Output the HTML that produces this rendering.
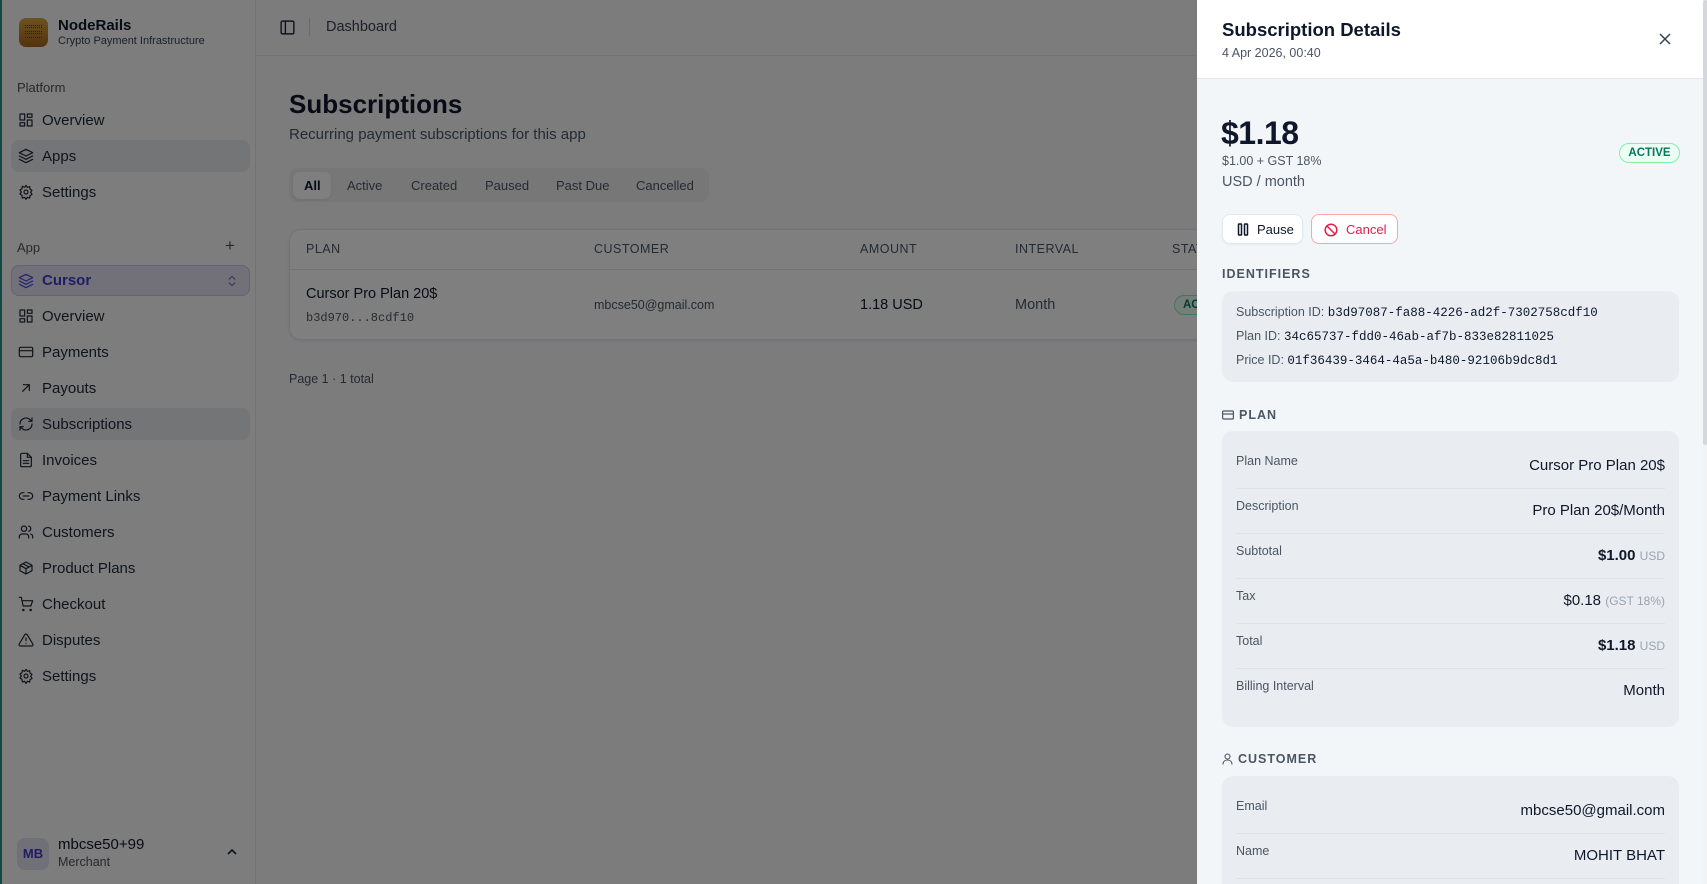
<!DOCTYPE html>
<html style="background:#7c7c7d"><head><meta charset="utf-8"><style>
*{box-sizing:border-box;margin:0;padding:0}
html,body{overflow:hidden;height:884px}
body{width:1707px;height:884px;font-family:"Liberation Sans",sans-serif;background:#f8f9fb;position:relative;color:#0f172a}
.abs{position:absolute;white-space:nowrap}
.side{position:absolute;left:0;top:0;width:256px;height:884px;background:#fafafa;border-right:1px solid #e5e7eb;border-left:2px solid #2a8c8c}
.nav{position:absolute;left:9px;width:239px;height:32px;border-radius:8px;font-size:15px;color:#1f2937;display:flex;align-items:center;padding-left:7px}
.nav svg{width:16px;height:16px;margin-right:8px;stroke:#1f2937;fill:none;stroke-width:1.8;stroke-linecap:round;stroke-linejoin:round}
.nav.act{background:#e9eaec}
.lbl{font-size:13px;color:#52525b}
.top{position:absolute;left:256px;top:0;right:0;height:56px;border-bottom:1px solid #e5e7eb}
.ov{position:absolute;left:0;top:0;width:1197px;height:884px;background:rgba(0,0,0,0.5)}
.drawer{position:absolute;left:1197px;top:0;width:506px;height:884px;background:#f3f6f9;overflow:hidden}
.dh{position:absolute;left:0;top:0;width:506px;height:79px;background:#fff;border-bottom:1px solid #e2e8f0}
.box{position:absolute;left:25px;width:457px;background:#e9edf1;border-radius:11px}
.row{position:absolute;left:14px;right:14px;height:45px;border-bottom:1px solid #dde2e8}
.row .l{position:absolute;left:0;top:10px;font-size:12.5px;color:#4b5563}
.row .v{position:absolute;right:0;top:13px;font-size:15px;color:#0f172a}
.sec{position:absolute;left:25px;font-size:12.5px;font-weight:bold;letter-spacing:1px;color:#4b5563;display:flex;align-items:center}
.mono{font-family:"Liberation Mono",monospace;color:#0f172a;font-size:12.5px}
.th{position:absolute;top:242px;font-size:12.5px;color:#4b5563;letter-spacing:.5px}
</style></head><body>
<div class="side">
 <div class="abs" style="left:17px;top:18px;width:29px;height:29px;border-radius:7px;background:linear-gradient(#d9a640,#a8651c)">
  <div style="position:absolute;left:6px;top:7px;width:17px;height:3px;border-top:1px dotted #5a3a10;border-bottom:1px dotted #5a3a10"></div>
  <div style="position:absolute;left:6px;top:13px;width:17px;height:3px;border-top:1px dotted #5a3a10;border-bottom:1px dotted #5a3a10"></div>
  <div style="position:absolute;left:6px;top:19px;width:17px;height:3px;border-top:1px dotted #5a3a10"></div>
 </div>
 <div class="abs" style="left:56px;top:17px;font-size:15px;font-weight:bold;color:#0f172a">NodeRails</div>
 <div class="abs" style="left:56px;top:35px;font-size:11px;color:#374151">Crypto Payment Infrastructure</div>
 <div class="abs lbl" style="left:15px;top:80px">Platform</div>
 <div class="nav" style="top:104px"><svg viewBox="0 0 24 24"><rect x="3" y="3" width="7" height="9"/><rect x="14" y="3" width="7" height="5"/><rect x="14" y="12" width="7" height="9"/><rect x="3" y="16" width="7" height="5"/></svg>Overview</div>
 <div class="nav act" style="top:140px"><svg viewBox="0 0 24 24"><path d="M12 2 2 7l10 5 10-5-10-5zM2 12l10 5 10-5M2 17l10 5 10-5"/></svg>Apps</div>
 <div class="nav" style="top:176px"><svg viewBox="0 0 24 24"><circle cx="12" cy="12" r="3"/><path d="M12 2l2 3 3.5-1 .5 3.5 3 2-2 3 2 3-3 2-.5 3.5-3.5-1-2 3-2-3-3.5 1L6 17l-3-2 2-3-2-3 3-2 .5-3.5L10 5z"/></svg>Settings</div>
 <div class="abs lbl" style="left:15px;top:240px">App</div>
 <div class="abs" style="left:223px;top:236px;font-size:17px;color:#52525b">+</div>
 <div class="nav" style="top:265px;height:31px;background:#e4e3f3;border:1px solid #c7c6ea;color:#4338ca;font-weight:bold;padding-left:6px"><svg viewBox="0 0 24 24" style="stroke:#4f46e5"><path d="M12 2 2 7l10 5 10-5-10-5zM2 12l10 5 10-5M2 17l10 5 10-5"/></svg>Cursor<svg viewBox="0 0 24 24" style="position:absolute;right:10px;top:7px;width:14px;height:16px;margin:0;stroke:#6b6bb0"><path d="M7 9l5-5 5 5M7 15l5 5 5-5"/></svg></div>
 <div class="nav" style="top:300px"><svg viewBox="0 0 24 24"><rect x="3" y="3" width="7" height="9"/><rect x="14" y="3" width="7" height="5"/><rect x="14" y="12" width="7" height="9"/><rect x="3" y="16" width="7" height="5"/></svg>Overview</div>
 <div class="nav" style="top:336px"><svg viewBox="0 0 24 24"><rect x="2" y="5" width="20" height="14" rx="2"/><path d="M2 10h20"/></svg>Payments</div>
 <div class="nav" style="top:372px"><svg viewBox="0 0 24 24"><path d="M7 17 17 7M8 7h9v9"/></svg>Payouts</div>
 <div class="nav act" style="top:408px"><svg viewBox="0 0 24 24"><path d="M21 12a9 9 0 0 1-15 6.7L3 16M3 12a9 9 0 0 1 15-6.7L21 8M21 3v5h-5M3 21v-5h5"/></svg>Subscriptions</div>
 <div class="nav" style="top:444px"><svg viewBox="0 0 24 24"><path d="M14 2H6a2 2 0 0 0-2 2v16a2 2 0 0 0 2 2h12a2 2 0 0 0 2-2V8z"/><path d="M14 2v6h6M8 13h8M8 17h8"/></svg>Invoices</div>
 <div class="nav" style="top:480px"><svg viewBox="0 0 24 24"><path d="M9 17H7A5 5 0 0 1 7 7h2M15 7h2a5 5 0 0 1 0 10h-2M8 12h8"/></svg>Payment Links</div>
 <div class="nav" style="top:516px"><svg viewBox="0 0 24 24"><circle cx="9" cy="7" r="4"/><path d="M2 21v-2a4 4 0 0 1 4-4h6a4 4 0 0 1 4 4v2M16 3.1a4 4 0 0 1 0 7.8M22 21v-2a4 4 0 0 0-3-3.9"/></svg>Customers</div>
 <div class="nav" style="top:552px"><svg viewBox="0 0 24 24"><path d="M21 8 12 3 3 8v8l9 5 9-5zM3 8l9 5 9-5M12 13v8M7.5 5.5l9 5"/></svg>Product Plans</div>
 <div class="nav" style="top:588px"><svg viewBox="0 0 24 24"><circle cx="8" cy="21" r="1"/><circle cx="19" cy="21" r="1"/><path d="M2 2h3l2.7 13h11.6L22 7H6"/></svg>Checkout</div>
 <div class="nav" style="top:624px"><svg viewBox="0 0 24 24"><path d="M10.3 3.9 1.8 18a2 2 0 0 0 1.7 3h17a2 2 0 0 0 1.7-3L13.7 3.9a2 2 0 0 0-3.4 0zM12 9v4M12 17h.01"/></svg>Disputes</div>
 <div class="nav" style="top:660px"><svg viewBox="0 0 24 24"><circle cx="12" cy="12" r="3"/><path d="M12 2l2 3 3.5-1 .5 3.5 3 2-2 3 2 3-3 2-.5 3.5-3.5-1-2 3-2-3-3.5 1L6 17l-3-2 2-3-2-3 3-2 .5-3.5L10 5z"/></svg>Settings</div>
 <div class="abs" style="left:15px;top:838px;width:32px;height:32px;border-radius:8px;background:#e0e0f0;color:#4338ca;font-size:13px;font-weight:bold;text-align:center;line-height:32px">MB</div>
 <div class="abs" style="left:56px;top:836px;font-size:15px;color:#0f172a">mbcse50+99</div>
 <div class="abs" style="left:56px;top:855px;font-size:12.5px;color:#52525b">Merchant</div>
 <svg class="abs" style="left:224px;top:848px" width="12" height="8" viewBox="0 0 12 8" fill="none" stroke="#1f2937" stroke-width="1.6"><path d="M2 6l4-4 4 4"/></svg>
</div>
<div class="top">
 <svg class="abs" style="left:23px;top:19px" width="17" height="17" viewBox="0 0 24 24" fill="none" stroke="#1f2937" stroke-width="2"><rect x="3" y="3" width="18" height="18" rx="2"/><path d="M9 3v18"/></svg>
 <div class="abs" style="left:53px;top:18px;width:1px;height:18px;background:#d4d4d8"></div>
 <div class="abs" style="left:70px;top:19px;font-size:14.5px;color:#374151">Dashboard</div>
</div>
<div class="abs" style="left:289px;top:89px;font-size:26px;font-weight:bold;color:#0f172a">Subscriptions</div>
<div class="abs" style="left:289px;top:126px;font-size:15px;color:#4b5563">Recurring payment subscriptions for this app</div>
<div class="abs" style="left:289px;top:168px;width:420px;height:34px;background:#efeff1;border-radius:9px"></div>
<div class="abs" style="left:293px;top:172px;width:38px;height:27px;background:#fff;border-radius:7px;box-shadow:0 1px 2px rgba(0,0,0,.1)"></div>
<div class="abs" style="left:304px;top:178px;font-size:13px;color:#0f172a;font-weight:bold">All</div>
<div class="abs" style="left:347px;top:178px;font-size:13px;color:#4b5563">Active</div>
<div class="abs" style="left:411px;top:178px;font-size:13px;color:#4b5563">Created</div>
<div class="abs" style="left:485px;top:178px;font-size:13px;color:#4b5563">Paused</div>
<div class="abs" style="left:556px;top:178px;font-size:13px;color:#4b5563">Past Due</div>
<div class="abs" style="left:636px;top:178px;font-size:13px;color:#4b5563">Cancelled</div>
<div class="abs" style="left:289px;top:229px;width:960px;height:111px;background:#fff;border:1px solid #e5e7eb;border-radius:12px;box-shadow:0 1px 3px rgba(0,0,0,.08)"></div>
<div class="abs" style="left:290px;top:269px;width:920px;height:1px;background:#e5e7eb"></div>
<div class="th" style="left:306px">PLAN</div>
<div class="th" style="left:594px">CUSTOMER</div>
<div class="th" style="left:860px">AMOUNT</div>
<div class="th" style="left:1015px">INTERVAL</div>
<div class="th" style="left:1172px">STATUS</div>
<div class="abs" style="left:306px;top:286px;font-size:14.5px;color:#0f172a">Cursor Pro Plan 20$</div>
<div class="abs" style="left:306px;top:311px;font-size:12px;font-family:'Liberation Mono',monospace;color:#4b5563">b3d970...8cdf10</div>
<div class="abs" style="left:594px;top:298px;font-size:12.5px;color:#4b5563">mbcse50@gmail.com</div>
<div class="abs" style="left:860px;top:297px;font-size:14.5px;color:#0f172a">1.18 USD</div>
<div class="abs" style="left:1015px;top:297px;font-size:14.5px;color:#4b5563">Month</div>
<div class="abs" style="left:1174px;top:295px;width:60px;height:20px;border:1px solid #86efac;border-radius:10px;background:#ecfdf5;color:#047857;font-size:11.5px;font-weight:bold;padding:3px 8px">ACTIVE</div>
<div class="abs" style="left:289px;top:372px;font-size:12.5px;color:#4b5563">Page 1 · 1 total</div>
<div class="ov"></div>
<div class="drawer">
 <div class="dh">
  <div class="abs" style="left:25px;top:19px;font-size:18.5px;font-weight:bold;color:#0f172a">Subscription Details</div>
  <div class="abs" style="left:25px;top:46px;font-size:12.5px;color:#4b5563">4 Apr 2026, 00:40</div>
  <svg class="abs" style="left:461px;top:32px" width="14" height="14" viewBox="0 0 14 14" stroke="#374151" stroke-width="1.5"><path d="M2 2l10 10M12 2 2 12"/></svg>
 </div>
 <div class="abs" style="left:24px;top:115px;font-size:32px;font-weight:bold;color:#0f172a;letter-spacing:-.5px">$1.18</div>
 <div class="abs" style="left:25px;top:154px;font-size:12.5px;color:#4b5563">$1.00 + GST 18%</div>
 <div class="abs" style="left:25px;top:174px;font-size:14.5px;color:#4b5563">USD / month</div>
 <div class="abs" style="left:422px;top:143px;width:61px;height:20px;border:1px solid #86efac;border-radius:10px;background:#ecfdf5;color:#047857;font-size:11.5px;font-weight:bold;text-align:center;line-height:18px">ACTIVE</div>
 <div class="abs" style="left:25px;top:214px;width:81px;height:30px;background:#fff;border:1px solid #e2e8f0;border-radius:8px;box-shadow:0 1px 2px rgba(0,0,0,.05)">
  <svg class="abs" style="left:14px;top:8px" width="12" height="13" viewBox="0 0 12 13" fill="none" stroke="#0f172a" stroke-width="1.5"><rect x="1.5" y="1" width="3" height="11" rx=".5"/><rect x="7.5" y="1" width="3" height="11" rx=".5"/></svg>
  <div class="abs" style="left:34px;top:7px;font-size:13px;color:#0f172a">Pause</div>
 </div>
 <div class="abs" style="left:114px;top:214px;width:87px;height:30px;background:#fff;border:1px solid #fca5a5;border-radius:8px">
  <svg class="abs" style="left:12px;top:8px" width="14" height="14" viewBox="0 0 14 14" fill="none" stroke="#e11d48" stroke-width="1.5"><circle cx="7" cy="7" r="5.8"/><path d="M3 3l8 8"/></svg>
  <div class="abs" style="left:34px;top:7px;font-size:13px;color:#e11d48">Cancel</div>
 </div>
 <div class="sec" style="top:267px">IDENTIFIERS</div>
 <div class="box" style="top:291px;height:91px">
  <div class="abs" style="left:14px;top:14px;font-size:12.5px;color:#4b5563">Subscription ID: <span class="mono">b3d97087-fa88-4226-ad2f-7302758cdf10</span></div>
  <div class="abs" style="left:14px;top:38px;font-size:12.5px;color:#4b5563">Plan ID: <span class="mono">34c65737-fdd0-46ab-af7b-833e82811025</span></div>
  <div class="abs" style="left:14px;top:62px;font-size:12.5px;color:#4b5563">Price ID: <span class="mono">01f36439-3464-4a5a-b480-92106b9dc8d1</span></div>
 </div>
 <div class="sec" style="top:408px"><svg width="12" height="10" viewBox="0 0 12 10" fill="none" stroke="#4b5563" stroke-width="1.2" style="margin-right:5px"><rect x=".6" y="1" width="10.8" height="8" rx="1"/><path d="M.6 4h10.8"/></svg>PLAN</div>
 <div class="box" style="top:431px;height:296px">
  <div class="row" style="top:13px"><div class="l">Plan Name</div><div class="v">Cursor Pro Plan 20$</div></div>
  <div class="row" style="top:58px"><div class="l">Description</div><div class="v">Pro Plan 20$/Month</div></div>
  <div class="row" style="top:103px"><div class="l">Subtotal</div><div class="v"><b>$1.00</b> <span style="font-size:12px;color:#9ca3af">USD</span></div></div>
  <div class="row" style="top:148px"><div class="l">Tax</div><div class="v">$0.18 <span style="font-size:12px;color:#9ca3af">(GST 18%)</span></div></div>
  <div class="row" style="top:193px"><div class="l">Total</div><div class="v"><b>$1.18</b> <span style="font-size:12px;color:#9ca3af">USD</span></div></div>
  <div class="row" style="top:238px;border:none"><div class="l">Billing Interval</div><div class="v">Month</div></div>
 </div>
 <div class="sec" style="top:752px"><svg width="11" height="12" viewBox="0 0 11 12" fill="none" stroke="#4b5563" stroke-width="1.1" style="margin-right:5px"><circle cx="5.5" cy="3.5" r="2.5"/><path d="M1 11.5c0-3 2-4.5 4.5-4.5S10 8.5 10 11.5"/></svg>CUSTOMER</div>
 <div class="box" style="top:776px;height:108px;border-radius:11px 11px 0 0">
  <div class="row" style="top:13px"><div class="l">Email</div><div class="v">mbcse50@gmail.com</div></div>
  <div class="row" style="top:58px"><div class="l">Name</div><div class="v">MOHIT BHAT</div></div>
 </div>
</div>
<div class="abs" style="left:1703px;top:0;width:4px;height:884px;background:#f1f3f5"></div>
<div class="abs" style="left:1703px;top:0;width:4px;height:445px;background:#d4d8dd;border-radius:2px"></div>
</body></html>
